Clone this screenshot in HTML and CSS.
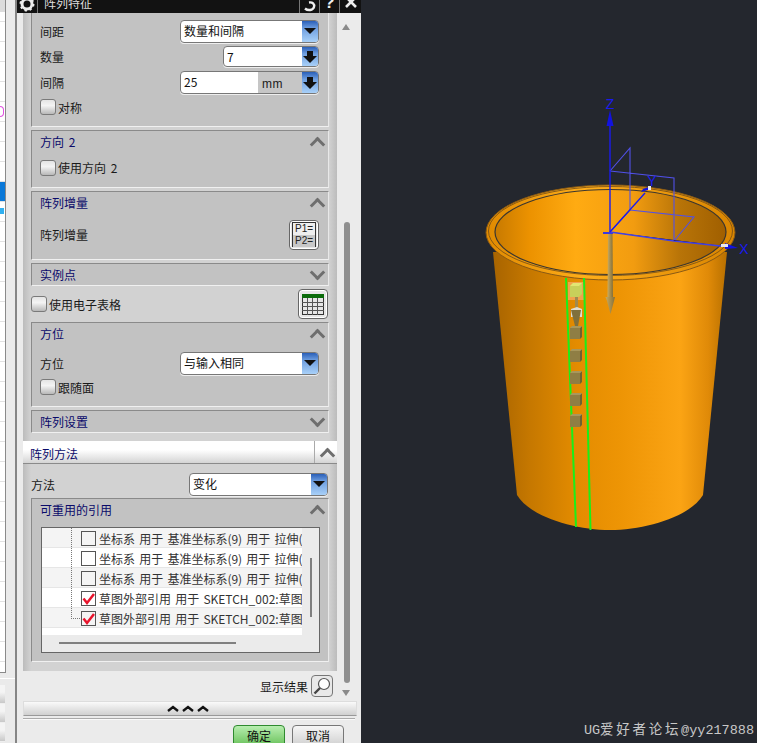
FILE: index.html
```html
<!DOCTYPE html>
<html lang="zh">
<head>
<meta charset="utf-8">
<title>阵列特征</title>
<link rel="stylesheet" href="styles.css">
</head>
<body>
<div class="app">
  <div class="strip">
    <div class="strip-list">
      <div class="strip-head"></div>
      <div class="strip-row first"></div><div class="strip-row"></div><div class="strip-row"></div><div class="strip-row"></div><div class="strip-row"></div>
      <div class="strip-row pink"><i class="pink-mark"></i></div><div class="strip-row"></div><div class="strip-row"></div><div class="strip-row"></div>
      <div class="strip-row blue"></div><div class="strip-row cyan"><i class="cyan-mark"></i></div><div class="strip-row"></div><div class="strip-row"></div>
      <div class="strip-row"></div><div class="strip-row"></div><div class="strip-row"></div><div class="strip-row"></div><div class="strip-row"></div>
      <div class="strip-row"></div><div class="strip-row"></div><div class="strip-row"></div><div class="strip-row"></div><div class="strip-row"></div>
      <div class="strip-row"></div><div class="strip-row"></div><div class="strip-row"></div><div class="strip-row"></div><div class="strip-row"></div>
      <div class="strip-row"></div><div class="strip-row"></div><div class="strip-row"></div><div class="strip-row"></div><div class="strip-row"></div>
    </div>
    <div class="strip-foot">
      <div class="foot-row"></div><div class="foot-row"></div><div class="foot-row"></div>
    </div>
  </div>

  <div class="dialog">
    <div class="titlebar">
      <div class="tb-gear">
        <svg width="16" height="16" viewBox="0 0 16 16"><circle cx="8" cy="8" r="5" fill="none" stroke="#eee" stroke-width="3"/><circle cx="8" cy="8" r="6.6" fill="none" stroke="#eee" stroke-width="1.8" stroke-dasharray="2.4 2.8"/></svg>
      </div>
      <div class="tb-title">阵列特征</div>
      <div class="tb-btn"><svg width="14" height="16" viewBox="0 0 14 16"><path d="M2 11.5c3 2.5 8 2 9-1.5.8-3-1.500-5-5-4.500" fill="none" stroke="#eee" stroke-width="2.400"/></svg></div>
      <div class="tb-btn tb-q">?</div>
      <div class="tb-btn tb-last"><svg width="14" height="16" viewBox="0 0 14 16"><path d="M2 0l10 10M12 0L2 10" stroke="#eee" stroke-width="2.600"/></svg></div>
    </div>

    <div class="scrollwrap">
      <div class="main">
        <div class="panel">
          <section class="group g-top">
            <div class="row tight"><span>间距</span>
              <div class="select"><span class="val">数量和间隔</span><span class="drop"><i class="tri"></i></span></div>
            </div>
            <div class="row"><span>数量</span>
              <div class="select small"><span class="val">7</span><span class="drop"><i class="darrow"></i></span></div>
            </div>
            <div class="row"><span>间隔</span>
              <div class="select"><span class="val val-num">25</span><span class="unit">mm</span><span class="drop"><i class="darrow"></i></span></div>
            </div>
            <div class="row tight"><label class="check"><i class="box"></i>对称</label></div>
          </section>

          <section class="group g-dir">
            <div class="ghead"><span>方向 2</span><i class="chev up"></i></div>
            <div class="row r-dir"><label class="check"><i class="box"></i>使用方向 2</label></div>
          </section>

          <section class="group g-inc">
            <div class="ghead"><span>阵列增量</span><i class="chev up"></i></div>
            <div class="row r-inc"><span>阵列增量</span>
              <div class="iconbtn"><div class="p12"><span>P1=</span><span class="p2">P2=</span></div></div>
            </div>
          </section>

          <section class="group g-closed g-points">
            <div class="ghead"><span>实例点</span><i class="chev down"></i></div>
          </section>

          <div class="sheet-row">
            <label class="check"><i class="box"></i>使用电子表格</label>
            <div class="iconbtn">
              <svg width="22" height="21" viewBox="0 0 22 21"><rect x=".5" y=".5" width="21" height="20" fill="#e6e6e6" stroke="#333"/><rect x="0" y="0" width="22" height="4" fill="#0a6b0a"/><path d="M0 8.500h22M0 12.500h22M0 16.500h22M5.500 4v17M10.500 4v17M15.500 4v17" stroke="#555" fill="none"/></svg>
            </div>
          </div>

          <section class="group g-ori">
            <div class="ghead"><span>方位</span><i class="chev up"></i></div>
            <div class="row tight r-ori"><span>方位</span>
              <div class="select"><span class="val">与输入相同</span><span class="drop"><i class="tri"></i></span></div>
            </div>
            <div class="row tight"><label class="check"><i class="box"></i>跟随面</label></div>
          </section>

          <section class="group g-closed g-set">
            <div class="ghead"><span>阵列设置</span><i class="chev down"></i></div>
          </section>
        </div>

        <div class="band">
          <span class="band-title">阵列方法</span>
          <span class="band-btn"><i class="chev up"></i></span>
        </div>

        <div class="panel panel-method">
          <div class="method-row"><span>方法</span>
            <div class="select"><span class="val">变化</span><span class="drop"><i class="tri"></i></span></div>
          </div>
          <section class="group g-refs">
            <div class="ghead"><span>可重用的引用</span><i class="chev up"></i></div>
            <div class="listbox">
              <div class="list-white">
                <div class="item alt"><i class="cb"></i><span class="txt">坐标系 用于 基准坐标系(9) 用于 拉伸(1)</span></div>
                <div class="item"><i class="cb"></i><span class="txt">坐标系 用于 基准坐标系(9) 用于 拉伸(1)</span></div>
                <div class="item alt"><i class="cb"></i><span class="txt">坐标系 用于 基准坐标系(9) 用于 拉伸(1)</span></div>
                <div class="item"><i class="cb"><svg width="16" height="15" viewBox="0 0 16 15"><path d="M2.500 7.500l3.500 4.500L13 3" fill="none" stroke="#e8142c" stroke-width="2.500"/></svg></i><span class="txt">草图外部引用 用于 SKETCH_002:草图(2)</span></div>
                <div class="item alt"><i class="cb"><svg width="16" height="15" viewBox="0 0 16 15"><path d="M2.500 7.500l3.500 4.500L13 3" fill="none" stroke="#e8142c" stroke-width="2.500"/></svg></i><span class="txt">草图外部引用 用于 SKETCH_002:草图(2)</span></div>
              </div>
              <i class="tree"></i>
              <i class="vbar"></i>
              <i class="hbar"></i>
            </div>
          </section>
        </div>

        <div class="result-row">
          <span>显示结果</span>
          <div class="lens"><svg width="20" height="20" viewBox="0 0 20 20"><circle cx="12" cy="8" r="5.500" fill="#fff" stroke="#555" stroke-width="1.200"/><path d="M8 12l-5.500 5.500" stroke="#444" stroke-width="2.400"/></svg></div>
        </div>
      </div>

      <div class="scrollbar">
        <i class="sb-up"></i>
        <i class="sb-thumb"></i>
        <i class="sb-down"></i>
      </div>
    </div>

    <div class="collapse">
      <svg width="42" height="9" viewBox="0 0 42 9"><path d="M1 7l5-4 5 4M16 7l5-4 5 4M31 7l5-4 5 4" fill="none" stroke="#111" stroke-width="2.400"/></svg>
    </div>
    <div class="rule"></div>
    <div class="actions">
      <button class="btn ok">确定</button>
      <button class="btn">取消</button>
    </div>
  </div>

  <div class="viewport">
    <svg class="scene" width="396" height="743" viewBox="361 0 396 743">
      <defs>
        <linearGradient id="body" x1="0" x2="1" y1="0" y2="0">
          <stop offset="0" stop-color="#a86400"/>
          <stop offset=".16" stop-color="#c67800"/>
          <stop offset=".36" stop-color="#e48c00"/>
          <stop offset=".55" stop-color="#ee9505"/>
          <stop offset=".8" stop-color="#fba414"/>
          <stop offset=".92" stop-color="#e08a08"/>
          <stop offset="1" stop-color="#b87000"/>
        </linearGradient>
        <linearGradient id="inner" x1="0" x2="1" y1="0" y2="0">
          <stop offset="0" stop-color="#c87a00"/>
          <stop offset=".15" stop-color="#ec9200"/>
          <stop offset=".35" stop-color="#ffab12"/>
          <stop offset=".6" stop-color="#f29c10"/>
          <stop offset=".8" stop-color="#b87408"/>
          <stop offset="1" stop-color="#a05f00"/>
        </linearGradient>
        <linearGradient id="rim" x1="0" x2="1" y1="0" y2="0">
          <stop offset="0" stop-color="#e08a00"/>
          <stop offset=".4" stop-color="#ffae1a"/>
          <stop offset="1" stop-color="#d98500"/>
        </linearGradient>
        <linearGradient id="shaft" x1="0" x2="1" y1="0" y2="0">
          <stop offset="0" stop-color="#c9ab60"/>
          <stop offset="1" stop-color="#85703a"/>
        </linearGradient>
      </defs>

      <path d="M493 252L517 495C530 517 575 530 610 530C645 530 690 517 703 495L727 252Z" fill="url(#body)"/>
      <ellipse cx="610.500" cy="232.500" rx="124.500" ry="47.500" fill="url(#rim)" stroke="#8a5a14"/>
      <ellipse cx="610.500" cy="231" rx="122" ry="44.500" fill="none" stroke="#6e4a18" stroke-width=".8"/>
      <ellipse cx="610.500" cy="232" rx="115.500" ry="42.500" fill="url(#inner)" stroke="#3a3630" stroke-width="1.200"/>

      <rect x="568" y="282" width="16" height="18" fill="#f5a860" opacity=".8"/>
      <path d="M566 278L576 527" stroke="#19f019" stroke-width="2"/>
      <path d="M584 278L590.500 530" stroke="#19f019" stroke-width="2"/>

      <g class="cubes">
        <path d="M570 286l3-3h9v11l-3 3h-9z" fill="#c8d05a"/><path d="M570 286l3-3h9l-3 3z" fill="#e2e672"/>
        <path d="M575 297h3v15h-3z" fill="#a08a50"/>
        <path d="M571 309l6-2 5 2v8h-11z" fill="#e0dcd0"/>
        <path d="M571 310h10l-3 16h-3z" fill="#80703c"/>
        <g fill="#8f7e44">
          <rect x="570" y="328" width="10" height="11"/><rect x="570" y="351" width="10" height="11"/><rect x="570" y="373" width="10" height="11"/><rect x="570" y="395" width="10" height="11"/><rect x="570" y="416" width="10" height="11"/>
        </g>
        <g fill="#6f6232">
          <path d="M580 328l2-2v11l-2 2z"/><path d="M580 351l2-2v11l-2 2z"/><path d="M580 373l2-2v11l-2 2z"/><path d="M580 395l2-2v11l-2 2z"/><path d="M580 416l2-2v11l-2 2z"/>
        </g>
        <g fill="#a8975c">
          <path d="M570 328l2-2h10l-2 2z"/><path d="M570 351l2-2h10l-2 2z"/><path d="M570 373l2-2h10l-2 2z"/><path d="M570 395l2-2h10l-2 2z"/><path d="M570 416l2-2h10l-2 2z"/>
        </g>
      </g>

      <path d="M608 232h4.500l.5 65h-5.500z" fill="url(#shaft)"/>
      <path d="M605.500 297h9.500l-1 4-3.500 13-3.500-13z" fill="url(#shaft)"/>

      <g fill="none" stroke="#5050e8" stroke-width="1.100">
        <path d="M610 171L630 148V210M610 171L674 178V241M630 210L694 217L674 241"/>
        <path d="M630 210L610 232" stroke="#2a2ae0"/>
      </g>
      <path d="M610 232V118" stroke="#1a1af0" stroke-width="1.400"/>
      <path d="M610 110l-3.500 16h7z" fill="#1212e0"/>
      <path d="M603 233h10" stroke="#3a3ae0" stroke-width="2"/>
      <path d="M610 232L674 241L730 247" stroke="#4040e8" stroke-width="1.400"/>
      <path d="M610 232L645 193" stroke="#1a1af0" stroke-width="1.300"/>
      <path d="M738 248l-13-5v6z" fill="#1212e0"/>
      <path d="M641 192l7-2 1-3-6 2z" fill="#1212e0"/>
      <rect x="721" y="244" width="7" height="3" fill="#e8e8f0"/>
      <rect x="648" y="186" width="3" height="4" fill="#e8e8f0"/>
      <text x="610" y="109" class="axis" text-anchor="middle">Z</text>
      <text x="652" y="186" class="axis" text-anchor="middle">Y</text>
      <text x="744" y="254" class="axis" text-anchor="middle">X</text>
    </svg>
    <div class="watermark">UG<span class="wm-cjk">爱好者论坛</span>@yy217888</div>
  </div>
</div>
</body>
</html>
```
FILE: styles.css
```css
* { box-sizing: border-box; }
html, body { margin: 0; padding: 0; }
body { width: 757px; height: 743px; overflow: hidden; background: #24272e; font-family: "Noto Sans CJK SC", "Liberation Sans", sans-serif; font-size: 12px; color: #1a1a1a; }
.app { display: flex; width: 757px; height: 743px; }

.strip { width: 15px; flex: none; background: #eaeaea; }
.strip-list { width: 6px; height: 673px; background: #fff; border-right: 1px solid #8a8a8a; border-bottom: 1px solid #8a8a8a; overflow: hidden; }
.strip-head { height: 12px; background: #dcdcdc; }
.strip-row { height: 20px; display: flow-root; border-bottom: 1px solid #e2e2e2; background: #fff; }
.strip-row.first { height: 10px; }
.strip-row.blue { background: #0a78d8; }
.pink-mark { display: block; width: 4px; height: 11px; margin-top: 4px; border: 1px solid #e050e0; border-left: 0; border-radius: 0 4px 4px 0; }
.cyan-mark { display: block; width: 4px; height: 6px; margin-top: 6px; background: #30b0f0; }
.strip-foot { margin-top: 5px; border-top: 1px solid #fff; padding-top: 6px; }
.foot-row { width: 5px; height: 19px; background: linear-gradient(180deg, #f4f4f4 40%, #c8c8c8); border-bottom: 1px solid #eee; }

.dialog { width: 346px; flex: none; background: #ebebeb; border-left: 2px solid #858585; display: flex; flex-direction: column; overflow: hidden; }

.titlebar { height: 13px; flex: none; background: #121212; display: flex; color: #eee; overflow: hidden; }
.tb-gear { width: 21px; border-right: 1px solid #777; display: flex; justify-content: center; }
.tb-gear svg { margin-top: -4px; flex: none; }
.tb-title { width: 261px; padding-left: 6px; font-size: 12px; line-height: 16px; margin-top: -5px; color: #ddd; }
.tb-btn { width: 20px; border-left: 1px solid #777; display: flex; justify-content: center; }
.tb-btn svg { margin-top: -3px; flex: none; }
.tb-q { font: bold 17px/20px "Liberation Sans", sans-serif; align-items: flex-end; }
.tb-last { width: 22px; }

.scrollwrap { height: 688px; flex: none; display: flex; }
.main { width: 314px; margin-left: 6px; flex: none; }

.panel { height: 428px; padding: 0 8px; background: linear-gradient(90deg, #bcbcbc 0, #d2d2d2 8px, #d2d2d2 306px, #bcbcbc 314px); }
.group { background: #c2c2c2; border-left: 1px solid #8a8a8a; border-top: 1px solid #8a8a8a; border-right: 1px solid #e8e8e8; border-bottom: 1px solid #f0f0f0; margin-bottom: 3px; padding: 0 9px 0 8px; }
.g-top { height: 114px; padding-top: 6px; border-top: 0; }
.g-dir { height: 58px; }
.g-inc { height: 69px; }
.g-closed { height: 23px; }
.g-points { margin-bottom: 0; }
.g-ori { height: 85px; }
.g-set { margin-bottom: 0; }
.g-refs { height: 164px; margin-bottom: 0; }

.ghead { height: 20px; display: flex; align-items: center; justify-content: space-between; color: #0a0a6a; font-size: 12px; word-spacing: 2px; }
.chev { display: block; width: 6px; height: 8px; position: relative; flex: none; }
.chev::before { content: ""; position: absolute; left: -1px; top: 2px; width: 8px; height: 8px; border: solid #6e6e6e; border-width: 3px 0 0 3px; transform: rotate(45deg); }
.chev.down::before { transform: rotate(225deg); top: -3px; }

.row { height: 26px; display: flex; align-items: center; justify-content: space-between; word-spacing: 2px; }
.row.tight { height: 24px; }
.row.r-dir { height: 33px; }
.row.r-inc { height: 45px; }
.row.r-ori { margin-top: 8px; }

.select { width: 139px; height: 23px; flex: none; display: flex; background: #fff; border: 1px solid #777; border-radius: 4px; box-shadow: 0 1px 0 #eee; overflow: hidden; }
.select.small { width: 96px; height: 21px; }
.val { flex: 1; padding-left: 3px; line-height: 20px; font-size: 12px; color: #111; }
.val-num { flex: none; width: 77px; }
.unit { flex: 1; background: #c6c6c6; padding-left: 4px; font: 12px/24px "Liberation Sans", sans-serif; letter-spacing: .5px; }
.drop { width: 16px; flex: none; background: linear-gradient(180deg, #2a5fb8 0, #6f9fe0 35%, #a8d0f8 100%); display: flex; align-items: center; justify-content: center; }
.tri { width: 0; height: 0; border: solid transparent; border-width: 6px 6px 0; border-top-color: #111; }
.darrow { width: 0; height: 0; border: solid transparent; border-width: 7px 7px 0; border-top-color: #111; position: relative; margin-top: 6px; }
.darrow::before { content: ""; position: absolute; left: -3px; top: -12px; width: 6px; height: 6px; background: #111; }

.check { display: flex; align-items: center; gap: 2px; font-size: 12px; }
.box { width: 16px; height: 16px; display: block; border: 1px solid #7a7a7a; border-radius: 3px; background: linear-gradient(180deg, #e4e4e4, #f4f4f4 40%, #b8b8b8); }

.iconbtn { width: 30px; height: 30px; flex: none; border: 1px solid #666; border-radius: 4px; background: #e6e6e6; box-shadow: inset 0 0 0 1px #fff; display: flex; align-items: center; justify-content: center; }
.p12 { width: 24px; height: 25px; border: 1px solid #333; display: flex; flex-direction: column; font: 10px/12px "Liberation Sans", sans-serif; color: #222; background: #eee; }
.p12 span { padding-left: 2px; }
.p12 .p2 { background: #c8c8c8; }

.sheet-row { height: 36px; display: flex; align-items: center; justify-content: space-between; padding-right: 1px; }

.band { height: 23px; display: flex; background: linear-gradient(180deg, #fff 0, #fff 40%, #d4d4d4 100%); border-bottom: 1px solid #8a8a8a; color: #0a0a6a; }
.band-title { flex: 1; padding-left: 7px; line-height: 25px; }
.band-btn { width: 23px; border-left: 1px solid #aaa; display: flex; align-items: center; justify-content: center; }

.panel-method { height: 207px; }
.method-row { height: 34px; display: flex; align-items: center; justify-content: space-between; padding-right: 1px; padding-top: 6px; }

.listbox { position: relative; width: 279px; height: 126px; margin: 8px 0 0 1px; background: #ebebeb; border: 1px solid #666; }
.list-white { width: 260px; height: 107px; background: #fff; }
.item { height: 20px; padding: 1px 0 0 39px; display: flex; align-items: center; overflow: hidden; background: #fff; border-bottom: 1px solid #e6e6e6; white-space: nowrap; }
.item.alt { background: #f4f4f4; }
.cb { width: 15px; height: 15px; flex: none; display: block; border: 1px solid #555; background: #fff; margin-right: 3px; }
.item.alt .cb { background: #f4f4f4; }
.cb svg { display: block; margin: -1px 0 0 -1px; }
.txt { color: #333; font-size: 12px; word-spacing: 1.500px; }
.tree { position: absolute; left: 29px; top: 0; width: 9px; height: 91px; border-left: 1px dotted #777; border-bottom: 1px dotted #777; }
.vbar { position: absolute; left: 268px; top: 30px; width: 2px; height: 59px; background: #808080; }
.hbar { position: absolute; left: 17px; top: 114px; width: 177px; height: 2px; background: #808080; }

.result-row { height: 29px; display: flex; align-items: center; justify-content: flex-end; gap: 3px; padding: 1px 4px 0 0; }
.lens { width: 22px; height: 22px; border: 1px solid #777; border-radius: 4px; background: #e8e8e8; display: flex; align-items: center; justify-content: center; }

.scrollbar { width: 18px; flex: none; position: relative; }
.sb-up, .sb-down { position: absolute; left: 5px; width: 0; height: 0; border: solid transparent; border-width: 0 4px 6px; border-bottom-color: #8a8a8a; }
.sb-up { top: 11px; }
.sb-down { top: 677px; border-width: 6px 4px 0; border-top-color: #8a8a8a; border-bottom-color: transparent; }
.sb-thumb { position: absolute; left: 7px; top: 209px; width: 6px; height: 461px; border-radius: 3px; background: #8f8f8f; }

.collapse { margin: 0 4px 0 6px; height: 15px; flex: none; background: linear-gradient(180deg, #fafafa, #d0d0d0); border: 1px solid #ddd; border-bottom-color: #999; display: flex; align-items: center; justify-content: center; padding-right: 5px; }
.rule { margin: 2px 6px 0; height: 2px; flex: none; background: #fafafa; border-top: 1px solid #aaa; }
.actions { display: flex; gap: 7px; padding: 5px 15px 0 216px; }
.btn { width: 52px; height: 26px; flex: none; padding: 0 0 6px; border: 1px solid #777; border-radius: 4px; background: linear-gradient(180deg, #f6f6f6, #c8c8c8); font: 12px "Noto Sans CJK SC", sans-serif; color: #111; }
.btn.ok { background: linear-gradient(180deg, #b8eeb0, #58b848); border-color: #2f8a2f; }

.viewport { flex: 1; position: relative; background: #24272e; overflow: hidden; }
.scene { display: block; }
.axis { font: 14px "Liberation Sans", sans-serif; fill: #1a1af0; }
.watermark { position: absolute; right: 3px; bottom: 4px; color: #c8c8c8; font: 13.500px/16px "Liberation Mono", "Noto Sans CJK SC", monospace; white-space: nowrap; }
.wm-cjk { letter-spacing: 2.700px; font-family: "Noto Sans CJK SC", monospace; }
```
